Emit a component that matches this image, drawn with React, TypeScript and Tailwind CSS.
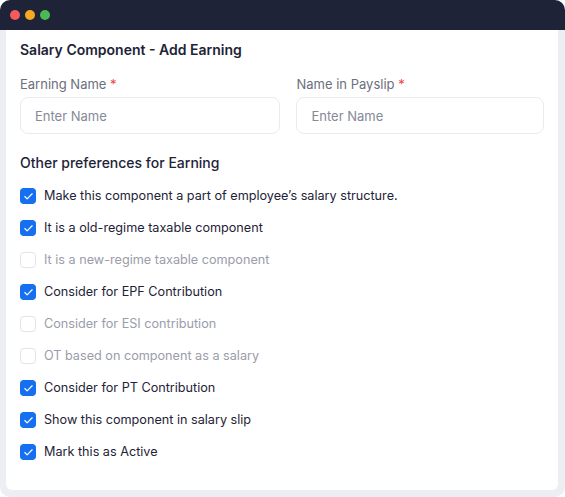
import { Check } from "lucide-react";

const PREFS = [
  { label: "Make this component a part of employee’s salary structure.", on: true },
  { label: "It is a old-regime taxable component", on: true },
  { label: "It is a new-regime taxable component", on: false },
  { label: "Consider for EPF Contribution", on: true },
  { label: "Consider for ESI contribution", on: false },
  { label: "OT based on component as a salary", on: false },
  { label: "Consider for PT Contribution", on: true },
  { label: "Show this component in salary slip", on: true },
  { label: "Mark this as Active", on: true },
];

export default function App() {
  return (
    <div
      className="w-[565px] h-[497px] rounded-[10px] overflow-hidden bg-[#eceef3] flex flex-col"
      style={{ fontFamily: "Inter, 'Noto Sans', sans-serif" }}
    >
      {/* window bar */}
      <div className="h-[30px] bg-[#1e2337] flex items-center gap-[5px] pl-[10px] shrink-0">
        <span className="w-[10px] h-[10px] rounded-full bg-[#f25c5c]" />
        <span className="w-[10px] h-[10px] rounded-full bg-[#f7a823]" />
        <span className="w-[10px] h-[10px] rounded-full bg-[#4cb853]" />
      </div>

      {/* panel */}
      <div className="ml-[6px] w-[552px] h-[460px] bg-white rounded-b-[6px] px-[14px] pt-[10px]">
        <h2 className="text-[14px] leading-[20px] font-semibold text-[#1e2337]">
          Salary Component - Add Earning
        </h2>

        <div className="flex gap-[16px] mt-[14px]">
          {[
            { label: "Earning Name", w: "w-[261px]" },
            { label: "Name in Payslip", w: "w-[248px]" },
          ].map((f) => (
            <div key={f.label} className={f.w}>
              <label className="block text-[13px] leading-[20px] text-[#6b6f7e]">
                {f.label} <span className="text-[#ef4444]">*</span>
              </label>
              <input
                placeholder="Enter Name"
                className="mt-[3px] w-full h-[37px] rounded-[8px] border border-[#e8eaef] px-[14px] text-[13px] text-[#1e2337] placeholder:text-[#858998] outline-none"
              />
            </div>
          ))}
        </div>

        <h3 className="mt-[19px] text-[14px] leading-[20px] font-medium text-[#1e2337]">
          Other preferences for Earning
        </h3>

        <div className="mt-[7px] flex flex-col">
          {PREFS.map((p) => (
            <label key={p.label} className="h-[32px] flex items-center gap-[8px]">
              {p.on ? (
                <span className="w-[16px] h-[16px] rounded-[4px] bg-[#1570ef] flex items-center justify-center">
                  <Check size={11} strokeWidth={2.5} className="text-white" />
                </span>
              ) : (
                <span className="w-[16px] h-[16px] rounded-[4px] border border-[#e3e5ea] bg-white" />
              )}
              <span
                className={`text-[12.65px] leading-[20px] ${p.on ? "text-[#1e2337]" : "text-[#9a9daa]"}`}
              >
                {p.label}
              </span>
            </label>
          ))}
        </div>
      </div>
    </div>
  );
}
